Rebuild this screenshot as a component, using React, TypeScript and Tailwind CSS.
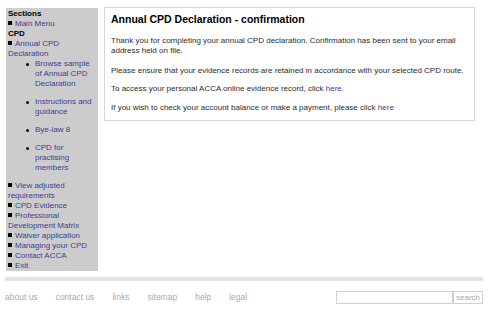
const Sq = () => <span className="inline-block w-[4px] h-[4px] bg-black mr-[3px] align-middle mb-[1px]"></span>;

const subLinks = [
  'Browse sample of Annual CPD Declaration',
  'Instructions and guidance',
  'Bye-law 8',
  'CPD for practising members',
];

const lowerLinks = [
  'View adjusted requirements',
  'CPD Evidence',
  'Professional Development Matrix',
  'Waiver application',
  'Managing your CPD',
  'Contact ACCA',
  'Exit',
];

const footerLinks = ['about us', 'contact us', 'links', 'sitemap', 'help', 'legal'];

export default function App() {
  return (
    <div className="w-[500px] h-[311px] bg-white font-['Liberation_Sans',Arial,sans-serif] overflow-hidden">
      <div className="flex items-start pl-[6px] pt-[8px] gap-[6px]">
        {/* left nav */}
        <div className="w-[92px] h-[263px] bg-[#cccccc] px-[2px] pt-[1px] text-[8px] leading-[10px] text-[#3d3d99]">
          <div className="font-bold text-black">Sections</div>
          <div><Sq />Main Menu</div>
          <div className="font-bold text-black">CPD</div>
          <div><Sq />Annual CPD Declaration</div>
          <ul className="pl-[27px] pr-[2px] mb-[7px]">
            {subLinks.map((l) => (
              <li key={l} className="relative mb-[8px]">
                <span className="absolute left-[-9px] top-[4px] w-[3px] h-[3px] rounded-full bg-black"></span>
                {l}
              </li>
            ))}
          </ul>
          {lowerLinks.map((l) => (
            <div key={l}><Sq />{l}</div>
          ))}
        </div>

        {/* main content */}
        <div className="w-[371px] h-[114px] mt-[-1px] border border-[#d6d6d6] px-[6px] pt-[4px] text-[8px] leading-[10px] text-[#2b2b2b]">
          <h1 className="text-[10.5px] leading-[14px] font-bold text-black mb-[10px]">Annual CPD Declaration - confirmation</h1>
          <p className="mb-[10px]">Thank you for completing your annual CPD declaration. Confirmation has been sent to your email address held on file.</p>
          <p className="mb-[8px]">Please ensure that your evidence records are retained in accordance with your selected CPD route.</p>
          <p className="mb-[9px]">To access your personal ACCA online evidence record, click <span className="text-[#3d3d99]">here.</span></p>
          <p>If you wish to check your account balance or make a payment, please click <span className="text-[#3d3d99]">here</span></p>
        </div>
      </div>

      {/* footer */}
      <div className="mx-[5px] mt-[6px] w-[478px] h-[4px] bg-[#e2e2e2]"></div>
      <div className="flex items-center justify-between pl-[5px] pr-[17px] mt-[10px]">
        <div className="flex gap-[18px] text-[8.5px] text-[#aaaaaa]">
          {footerLinks.map((l) => (
            <span key={l}>{l}</span>
          ))}
        </div>
        <div className="flex">
          <div className="w-[117px] h-[13px] border border-[#d0d0d0]"></div>
          <div className="h-[13px] px-[2px] border border-[#d0d0d0] text-[8px] leading-[11px] text-[#aaaaaa]">search</div>
        </div>
      </div>
    </div>
  );
}
